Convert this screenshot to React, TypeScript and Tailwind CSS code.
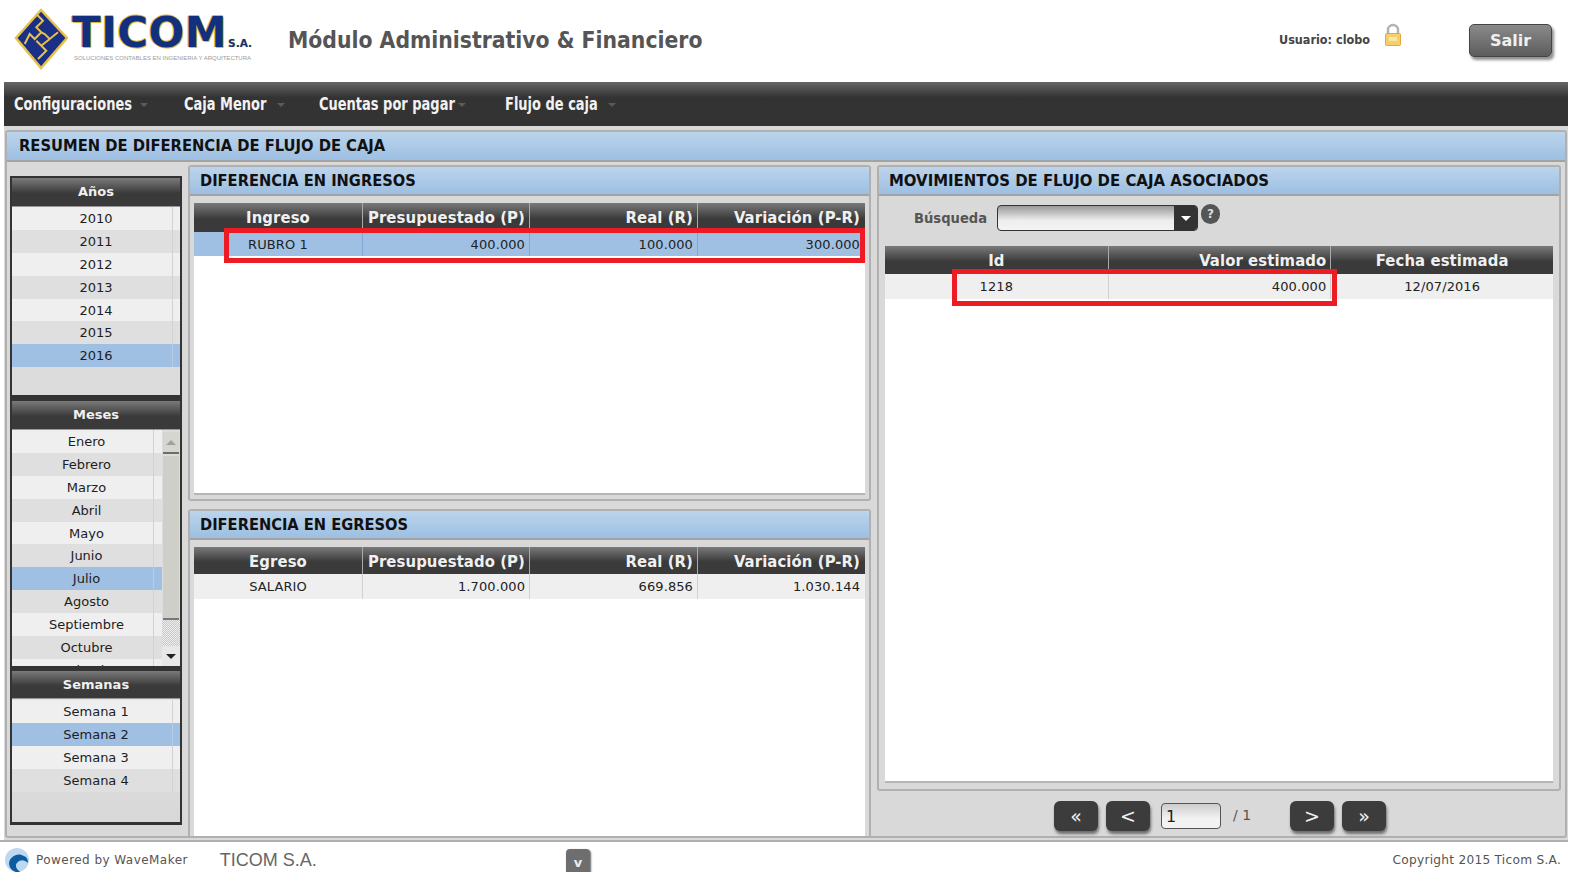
const DEJA = "font-['DejaVu_Sans',sans-serif]"

const years = ['2010', '2011', '2012', '2013', '2014', '2015', '2016']
const months = ['Enero', 'Febrero', 'Marzo', 'Abril', 'Mayo', 'Junio', 'Julio', 'Agosto', 'Septiembre', 'Octubre', 'Noviembre']
const weeks = ['Semana 1', 'Semana 2', 'Semana 3', 'Semana 4']

function Logo() {
  return (
    <div className="flex items-start">
      <svg width="54" height="62" viewBox="0 0 54 62" className="mt-[8px] ml-[14px]">
        <polygon points="27,2 53,30 27,60 2,30" fill="#1a2f86" stroke="#e8c04a" strokeWidth="2.5" />
        <path d="M22.3 6 L29 12.7 L22.3 19.3 L27.3 24.3 L20.7 31 L15.7 26 L10.7 36 M44 24.3 L35.7 31 L30.7 26 L27.3 24.3 M35.7 31 L27.3 37.7 L22.3 32.7 M27.3 37.7 L32.3 42.7 L24 51" fill="none" stroke="#e8c04a" strokeWidth="2" />
      </svg>
      <div className="flex flex-col ml-[4px] mt-[12px]">
        <div className="flex items-end h-[42px]">
          <span className="font-bold text-[42px] leading-[42px] tracking-[0.5px] text-[#12307e] [text-shadow:1px_1px_0_#e0b640,-1px_0_0_#e0b640,0_-1px_0_#e0b640]">TICOM</span>
          <span className="ml-[1px] mb-[4px] font-bold text-[10.5px] leading-[14px] text-[#12307e] [text-shadow:0_0_1px_#e0b640]">S.A.</span>
        </div>
        <span className="font-['Liberation_Sans',sans-serif] text-[6px] leading-[8px] ml-[2px] text-[#9a9a9a] whitespace-nowrap">SOLUCIONES CONTABLES EN INGENIERIA Y ARQUITECTURA</span>
      </div>
    </div>
  )
}

function LockIcon() {
  return (
    <svg width="18" height="24" viewBox="0 0 18 24">
      <path d="M4 11 V7 a5 5 0 0 1 10 0 V11" fill="none" stroke="#b3b3b3" strokeWidth="2.5" />
      <rect x="1.5" y="10.5" width="15" height="12" rx="1" fill="#f6cf6c" stroke="#e5a63c" />
      <rect x="5" y="14" width="8" height="4" fill="#fbe7a4" />
    </svg>
  )
}

function NavItem({ label, width, textWidth }: { label: string; width: string; textWidth: string }) {
  return (
    <div className={`${width} flex items-center`}>
      <div className={textWidth}>
        <span className="block origin-left scale-x-[0.85] text-[17px] font-bold text-[#f2f2f2] [font-stretch:condensed] whitespace-nowrap">{label}</span>
      </div>
      <span className="mt-[1px] border-x-[4px] border-t-[4px] border-x-transparent border-t-[#5a5a5a]" />
    </div>
  )
}

function DarkHeader({ title, height }: { title: string; height: string }) {
  return (
    <div className={`${height} shrink-0 bg-[linear-gradient(#7a7a7a,#3a3a3a_55%,#3a3a3a)] flex items-center justify-center border-b border-[#999]`}>
      <span className="text-[13px] font-bold text-[#f0f0f0]">{title}</span>
    </div>
  )
}

function ListRow({ label, index, selected, center }: { label: string; index: number; selected: boolean; center: string }) {
  const bg = selected ? 'bg-[#9fc0e3]' : index % 2 === 0 ? 'bg-[#efefef]' : 'bg-[#dfdfdf]'
  return (
    <div className={`h-[22.9px] shrink-0 flex ${bg} text-[#1d1d1d] text-[13px] leading-[23px]`}>
      <div className={`${center} pl-[8px] text-center whitespace-nowrap`}>{label}</div>
      <div className={`flex-1 border-l ${selected ? 'border-[#b5cde8]' : 'border-[#d2d2d2]'}`} />
    </div>
  )
}

function ScrollBar() {
  return (
    <div className="w-[18px] shrink-0 bg-[#dcdcdc] flex flex-col">
      <div className="h-[22px] mt-[2px] mx-[1px] bg-[#d6d6d0] border-b-2 border-[#6c6c6c] flex items-center justify-center">
        <span className="border-x-[5px] border-b-[5px] border-x-transparent border-b-[#a0a0a0]" />
      </div>
      <div className="h-[164px] mt-[2px] mx-[1px] bg-[#cfcfc9] border-b-2 border-[#777]" />
      <div className="flex-1 bg-[repeating-conic-gradient(#c8c8c8_0_25%,#eeeeee_0_50%)] bg-[length:2px_2px]" />
      <div className="h-[20px] bg-[#e8e8e8] flex items-center justify-center">
        <span className="border-x-[5px] border-t-[5px] border-x-transparent border-t-[#222]" />
      </div>
    </div>
  )
}

function Sidebar() {
  return (
    <div className="w-[172px] shrink-0 mt-[14px] flex flex-col bg-[#333] p-[2px] pb-[3px] h-[649px]">
      <DarkHeader title="Años" height="h-[29px]" />
      <div className="h-[188px] shrink-0 bg-[#dcdcdc] flex flex-col">
        {years.map((y, i) => (
          <ListRow key={y} label={y} index={i} selected={y === '2016'} center="w-[160px]" />
        ))}
      </div>
      <div className="h-[6px] shrink-0" />
      <DarkHeader title="Meses" height="h-[29px]" />
      <div className="h-[236px] shrink-0 flex overflow-hidden">
        <div className="flex-1 flex flex-col overflow-hidden">
          {months.map((m, i) => (
            <ListRow key={m} label={m} index={i} selected={m === 'Julio'} center="w-[141px]" />
          ))}
        </div>
        <ScrollBar />
      </div>
      <div className="h-[5px] shrink-0" />
      <DarkHeader title="Semanas" height="h-[28px]" />
      <div className="flex-1 bg-[linear-gradient(#e2e2e2,#d8d8d8)] flex flex-col pt-[1px]">
        {weeks.map((w, i) => (
          <ListRow key={w} label={w} index={i} selected={w === 'Semana 2'} center="w-[160px]" />
        ))}
      </div>
    </div>
  )
}

function BlueBar({ title, size, big }: { title: string; size: string; big?: boolean }) {
  return (
    <div className={`${big ? 'h-[30px] pl-[12px]' : 'h-[29px] pl-[10px] pt-[1px]'} shrink-0 flex items-center rounded-t-[3px] bg-[linear-gradient(#bcd4ec,#9dbfe2)] border-b-2 border-[#a3a3a3]`}>
      <span className={`${size} font-bold text-[#111] [font-stretch:condensed] whitespace-nowrap`}>{title}</span>
    </div>
  )
}

type Col = { label: string; width: string; align: 'center' | 'right' }

function Grid({ cols, rows, selected, rowH, headH }: { cols: Col[]; rows: string[][]; selected?: boolean; rowH: string; headH: string }) {
  return (
    <div className="flex flex-col">
      <div className={`${headH} flex bg-[linear-gradient(#7a7a7a,#3a3a3a_55%,#3a3a3a)]`}>
        {cols.map((c, i) => (
          <div key={c.label} className={`${c.width} ${i > 0 ? 'border-l border-[#aaa]' : ''} ${c.align === 'right' ? 'text-right pr-[4px]' : 'text-center'} pt-[2px] text-[16.5px] font-bold text-[#f0f0f0] [font-stretch:condensed] tracking-[0.1px] whitespace-nowrap leading-[26px]`}>
            {c.label}
          </div>
        ))}
      </div>
      {rows.map(r => (
        <div key={r[0]} className={`${rowH} flex ${selected ? 'bg-[#9fc0e3]' : 'bg-[#efefef]'}`}>
          {r.map((v, i) => (
            <div key={i} className={`${cols[i].width} ${i > 0 ? `border-l ${selected ? 'border-[#7fa8d8]' : 'border-[#d0d0d0]'}` : ''} ${cols[i].align === 'right' ? 'text-right pr-[4px]' : 'text-center'} text-[13px] tracking-[0.1px] text-[#222] leading-[25px]`}>
              {v}
            </div>
          ))}
        </div>
      ))}
    </div>
  )
}

function RedBox({ className }: { className: string }) {
  return <div className={`absolute border-[5px] border-[#ed1c24] ${className}`} />
}

function PagerButton({ label }: { label: string }) {
  return (
    <button className="w-[44px] h-[30px] rounded-[6px] bg-[#3c3c3c] shadow-[1px_3px_3px_rgba(0,0,0,0.5)] text-[#eee] text-[19px] leading-[28px] font-normal">
      {label}
    </button>
  )
}

function WaveIcon() {
  return (
    <svg width="26" height="30" viewBox="0 0 26 30">
      <circle cx="13" cy="15" r="12" fill="#bcd9f0" />
      <path d="M20 11 C14 7 6 11 5 18 C5 24 10 28 18 28 C12 25 10 20 14 17 C16 15 20 14 24 18 C24 15 23 12 20 11 Z" fill="#0d5c9f" />
    </svg>
  )
}

const ingresoCols: Col[] = [
  { label: 'Ingreso', width: 'w-[168px]', align: 'center' },
  { label: 'Presupuestado (P)', width: 'w-[167px]', align: 'right' },
  { label: 'Real (R)', width: 'w-[168px]', align: 'right' },
  { label: 'Variación (P-R)', width: 'w-[167px]', align: 'right' },
]
const egresoCols: Col[] = [{ ...ingresoCols[0], label: 'Egreso' }, ...ingresoCols.slice(1)]
const movCols: Col[] = [
  { label: 'Id', width: 'w-[223px]', align: 'center' },
  { label: 'Valor estimado', width: 'w-[223px]', align: 'right' },
  { label: 'Fecha estimada', width: 'w-[223px]', align: 'center' },
]

export default function App() {
  return (
    <div className={`${DEJA} w-[1570px] h-[872px] overflow-hidden bg-white pl-[4px] pr-[2px] flex flex-col`}>
      {/* cabecera */}
      <header className="h-[82px] shrink-0 flex items-start -ml-[4px] bg-white">
        <Logo />
        <h1 className="ml-[36px] mt-[23px] text-[22.7px] leading-[34px] font-bold text-[#555] [font-stretch:condensed] whitespace-nowrap">
          Módulo Administrativo &amp; Financiero
        </h1>
        <div className="flex-1" />
        <span className="mt-[32px] text-[12.5px] leading-[16px] font-bold text-[#444] [font-stretch:condensed]">Usuario: clobo</span>
        <div className="ml-[14px] mt-[23px]"><LockIcon /></div>
        <button className="ml-[67px] mr-[16px] mt-[24px] w-[83px] h-[33px] rounded-[5px] bg-[linear-gradient(#8a8a8a,#5c5c5c)] border border-[#444] shadow-[2px_3px_3px_rgba(0,0,0,0.45)] text-[16px] font-bold text-[#f0f0f0]">
          Salir
        </button>
      </header>

      {/* menu */}
      <nav className="h-[44px] shrink-0 bg-[linear-gradient(#666,#333_35%,#333)] flex items-center pl-[10px] pt-[1px]">
        <NavItem label="Configuraciones" width="w-[170px]" textWidth="w-[126px]" />
        <NavItem label="Caja Menor" width="w-[135px]" textWidth="w-[93px]" />
        <NavItem label="Cuentas por pagar" width="w-[186px]" textWidth="w-[139px]" />
        <NavItem label="Flujo de caja" width="w-[120px]" textWidth="w-[103px]" />
      </nav>

      {/* contenido */}
      <main className="h-[714px] shrink-0 bg-[#d9d9d9] pt-[4px] px-[1px] pr-[1px]">
        <div className="h-[708px] border-2 border-[#b0b0b0] rounded-[3px] flex flex-col">
          <BlueBar title="RESUMEN DE DIFERENCIA DE FLUJO DE CAJA" size="text-[16.4px]" big />
          <div className="flex-1 flex pl-[3px] pr-[3px] min-h-0">
            <Sidebar />

            <div className="w-[683px] ml-[6px] shrink-0 flex flex-col mt-[3px] gap-[8px]">
              <section className="relative h-[338px] border-2 border-[#b0b0b0] rounded-[3px] flex flex-col">
                <BlueBar title="DIFERENCIA EN INGRESOS" size="text-[16.3px]" />
                <div className="flex-1 px-[4px] pt-[7px] pb-[4px] flex flex-col">
                  <div className="flex-1 bg-white border-b-2 border-[#b5b5b5]">
                    <Grid cols={ingresoCols} rows={[['RUBRO 1', '400.000', '100.000', '300.000']]} selected headH="h-[29px]" rowH="h-[24px]" />
                  </div>
                </div>
                <RedBox className="left-[34px] top-[61px] w-[641px] h-[35px]" />
              </section>
              <section className="h-[329px] border-x-2 border-t-2 border-[#b0b0b0] rounded-t-[3px] flex flex-col">
                <BlueBar title="DIFERENCIA EN EGRESOS" size="text-[16.3px]" />
                <div className="flex-1 px-[4px] pt-[7px] flex flex-col">
                  <div className="flex-1 bg-white">
                    <Grid cols={egresoCols} rows={[['SALARIO', '1.700.000', '669.856', '1.030.144']]} headH="h-[27px]" rowH="h-[25px]" />
                  </div>
                </div>
              </section>
            </div>

            <div className="w-[684px] ml-[6px] shrink-0 flex flex-col mt-[3px]">
              <section className="relative h-[626px] border-2 border-[#b0b0b0] rounded-[3px] flex flex-col">
                <BlueBar title="MOVIMIENTOS DE FLUJO DE CAJA ASOCIADOS" size="text-[16.6px]" />
                <div className="h-[50px] shrink-0 flex items-start pt-[9px] pl-[35px]">
                  <span className="mt-[3px] w-[83px] text-[14.6px] leading-[20px] font-bold text-[#555] [font-stretch:condensed]">Búsqueda</span>
                  <div className="w-[201px] h-[26px] rounded-[4px] border border-[#333] bg-[linear-gradient(#999,#eee_60%,#f4f4f4)] flex justify-end">
                    <div className="w-[23px] rounded-r-[3px] bg-[#333] flex items-center justify-center">
                      <span className="border-x-[5px] border-t-[5px] border-x-transparent border-t-white" />
                    </div>
                  </div>
                  <div className="ml-[3px] -mt-[1px] w-[19px] h-[20px] rounded-full bg-[#555] text-[#ddd] text-[12px] leading-[20px] font-bold text-center">?</div>
                </div>
                <div className="flex-1 px-[6px] pb-[6px] flex flex-col">
                  <div className="flex-1 bg-white border-b-2 border-[#b5b5b5]">
                    <Grid cols={movCols} rows={[['1218', '400.000', '12/07/2016']]} headH="h-[28px]" rowH="h-[25px]" />
                  </div>
                </div>
                <RedBox className="left-[73px] top-[102px] w-[385px] h-[37px]" />
              </section>
              <div className="flex-1 flex items-start pt-[10px] pl-[177px]">
                <PagerButton label="«" />
                <div className="ml-[8px]"><PagerButton label="<" /></div>
                <input readOnly value="1" className="ml-[11px] mt-[2px] w-[60px] h-[26px] rounded-[4px] border border-[#555] bg-[linear-gradient(#ccc,#f2f2f2_60%)] pl-[4px] text-[16px] text-[#222]" />
                <span className="ml-[12px] mt-[5px] text-[14px] leading-[18px] text-[#555]">/ 1</span>
                <div className="ml-[39px]"><PagerButton label=">" /></div>
                <div className="ml-[8px]"><PagerButton label="»" /></div>
              </div>
            </div>
          </div>
        </div>
      </main>

      {/* pie */}
      <footer className="flex-1 flex items-center bg-white border-t-2 border-[#b0b0b0] -ml-[4px] pl-[4px] pr-[7px] pt-[3px]">
        <WaveIcon />
        <span className="ml-[6px] text-[12px] tracking-[0.45px] text-[#555] whitespace-nowrap">Powered by WaveMaker</span>
        <span className="ml-[32px] font-['Liberation_Sans',sans-serif] text-[18px] text-[#666] whitespace-nowrap">TICOM S.A.</span>
        <div className="ml-[249px] mt-[4px] w-[24px] h-[26px] rounded-[4px] bg-[#6e6e6e] shadow-[1px_1px_2px_rgba(0,0,0,0.6)] text-[#eee] text-[13px] font-bold text-center leading-[28px]">v</div>
        <div className="flex-1" />
        <span className="text-[12.2px] tracking-[0.25px] text-[#555] whitespace-nowrap">Copyright 2015 Ticom S.A.</span>
      </footer>
    </div>
  )
}
